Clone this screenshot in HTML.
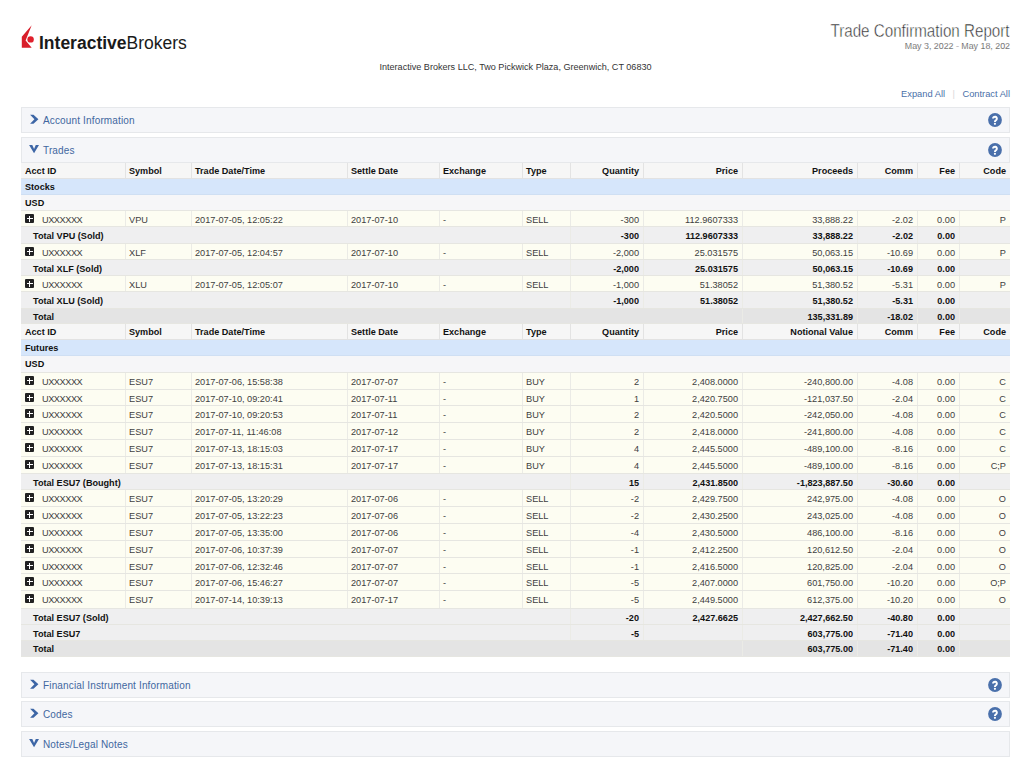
<!DOCTYPE html>
<html><head><meta charset="utf-8"><style>
*{margin:0;padding:0;box-sizing:border-box}
html,body{width:1031px;height:776px;overflow:hidden;background:#fff;font-family:"Liberation Sans",sans-serif}
.abs{position:absolute}
.logo{position:absolute;left:21px;top:24px}
.brand{position:absolute;left:39px;top:32.5px;font-size:17.5px;color:#1a1a1a;white-space:nowrap}
.brand b{font-weight:bold}
.title{position:absolute;right:21px;top:21px;font-size:17.5px;line-height:20px;color:#2a2a2a;-webkit-text-stroke:0.45px #fff;white-space:nowrap;transform:scaleX(0.867);transform-origin:100% 50%}
.date{position:absolute;right:21px;top:40.5px;font-size:8.85px;color:#3a3a3a;-webkit-text-stroke:0.2px #fff;white-space:nowrap}
.addr{position:absolute;left:0;width:1031px;top:61.5px;text-align:center;font-size:9.08px;color:#333;white-space:nowrap}
.links{position:absolute;right:21px;top:88.5px;font-size:9.3px;color:#4a6fa8;white-space:nowrap}
.links .sep{color:#d8d8d8;margin:0 7.5px 0 7.5px}
.panel{position:absolute;left:21px;width:989px;background:#f5f6f9;border:1px solid #e6e8eb}
.chev{position:absolute;left:8px;top:6px}
.chevd{position:absolute;left:7px;top:6px}
.ptitle{position:absolute;left:21px;top:6.5px;font-size:10px;letter-spacing:0.15px;color:#42679f;white-space:nowrap}
.help{position:absolute;right:7px;top:4.6px}
.tbl{position:absolute;left:21px;top:0;width:989px}
.row{position:absolute;left:0;width:989px;border-bottom:1px solid #e6e6e1}
.row.hdr{border-bottom:1px solid #e2e2e2}
.row.asset{border-bottom:1px solid #cfdff3}
.c{position:absolute;top:0;height:100%;padding:0 4px;white-space:nowrap;overflow:visible;font-size:9.1px;line-height:inherit}
.c.l{text-align:left}
.c.r{text-align:right}
.c.b{font-weight:bold;color:#111}
.c.n{color:#404040;font-size:9.2px}
.vl{position:absolute;top:0;width:1px;height:100%}
.plus{position:absolute;left:4px;top:3px;width:9px;height:9px;background:#222;border-radius:1px}
.plus:before{content:"";position:absolute;left:1.5px;top:3.6px;width:6px;height:1.8px;background:#fff}
.plus:after{content:"";position:absolute;left:3.6px;top:1.5px;width:1.8px;height:6px;background:#fff}
</style></head><body>
<svg class="logo" width="16" height="26" viewBox="0 0 16 26"><path d="M10.7 1.2 L0.8 12.7 L0.8 23.7 L10.7 23.7 L4.6 16.5 Z" fill="#d81e2a"/><circle cx="9.6" cy="15.4" r="3.2" fill="#e0202c"/></svg><div class="brand"><b>Interactive</b>Brokers</div><div class="title">Trade Confirmation Report</div><div class="date">May 3, 2022 - May 18, 202</div><div class="addr">Interactive Brokers LLC, Two Pickwick Plaza, Greenwich, CT 06830</div><div class="links">Expand All<span class="sep">|</span>Contract All</div><div class="panel" style="top:107px;height:26px"><svg class="chev" width="10" height="11" viewBox="0 0 10 11"><path d="M0.1 0.7 L3.5 0.7 L8.4 5.25 L3.5 9.8 L0.1 9.8 L4.4 5.25 Z" fill="#3d66a6"/></svg><span class="ptitle">Account Information</span><svg class="help" width="14" height="14" viewBox="0 0 14 14"><circle cx="7" cy="7" r="6.9" fill="#4a70ab"/><path d="M5.05 5.6 A1.9 1.9 0 1 1 8.6 6.55 Q8.2 7.2 7.5 7.6 Q6.95 7.95 6.95 9.1" stroke="#fff" stroke-width="2" fill="none"/><circle cx="6.95" cy="10.85" r="1.1" fill="#fff"/></svg></div><div class="panel" style="top:137px;height:26px"><svg class="chevd" width="11" height="10" viewBox="0 0 11 10"><path d="M0.1 0.9 L3.3 0.9 L5.05 4.9 L6.8 0.9 L10 0.9 L5.05 9.2 Z" fill="#3d66a6"/></svg><span class="ptitle">Trades</span><svg class="help" width="14" height="14" viewBox="0 0 14 14"><circle cx="7" cy="7" r="6.9" fill="#4a70ab"/><path d="M5.05 5.6 A1.9 1.9 0 1 1 8.6 6.55 Q8.2 7.2 7.5 7.6 Q6.95 7.95 6.95 9.1" stroke="#fff" stroke-width="2" fill="none"/><circle cx="6.95" cy="10.85" r="1.1" fill="#fff"/></svg></div><div class="tbl"><div class="row hdr" style="top:163px;height:16px;line-height:17px;background:#f6f6f6"><div class="c b l" style="left:0px;width:104px">Acct ID</div><div class="c b l" style="left:104px;width:66px">Symbol</div><div class="c b l" style="left:170px;width:156px">Trade Date/Time</div><div class="c b l" style="left:326px;width:92px">Settle Date</div><div class="c b l" style="left:418px;width:83px">Exchange</div><div class="c b l" style="left:501px;width:48px">Type</div><div class="c b r" style="left:549px;width:73px">Quantity</div><div class="c b r" style="left:622px;width:99px">Price</div><div class="c b r" style="left:721px;width:115px">Proceeds</div><div class="c b r" style="left:836px;width:60px">Comm</div><div class="c b r" style="left:896px;width:42px">Fee</div><div class="c b r" style="left:938px;width:51px">Code</div><i class="vl" style="left:104px;background:#e3e3e3"></i><i class="vl" style="left:170px;background:#e3e3e3"></i><i class="vl" style="left:326px;background:#e3e3e3"></i><i class="vl" style="left:418px;background:#e3e3e3"></i><i class="vl" style="left:501px;background:#e3e3e3"></i><i class="vl" style="left:549px;background:#e3e3e3"></i><i class="vl" style="left:622px;background:#e3e3e3"></i><i class="vl" style="left:721px;background:#e3e3e3"></i><i class="vl" style="left:836px;background:#e3e3e3"></i><i class="vl" style="left:896px;background:#e3e3e3"></i><i class="vl" style="left:938px;background:#e3e3e3"></i></div><div class="row asset" style="top:179px;height:16px;line-height:17px;background:#d6e6fb"><div class="c b l" style="left:0px;width:989px">Stocks</div></div><div class="row cur" style="top:195px;height:16px;line-height:17px;background:#f6f6f8"><div class="c b l" style="left:0px;width:989px">USD</div></div><div class="row data" style="top:211px;height:16px;line-height:18px;background:#fdfdf2"><i class="plus"></i><div class="c n l" style="left:0px;width:104px;padding-left:21px;letter-spacing:-0.45px">UXXXXXX</div><div class="c n l" style="left:104px;width:66px">VPU</div><div class="c n l" style="left:170px;width:156px">2017-07-05, 12:05:22</div><div class="c n l" style="left:326px;width:92px">2017-07-10</div><div class="c n l" style="left:418px;width:83px">-</div><div class="c n l" style="left:501px;width:48px">SELL</div><div class="c n r" style="left:549px;width:73px">-300</div><div class="c n r" style="left:622px;width:99px">112.9607333</div><div class="c n r" style="left:721px;width:115px">33,888.22</div><div class="c n r" style="left:836px;width:60px">-2.02</div><div class="c n r" style="left:896px;width:42px">0.00</div><div class="c n r" style="left:938px;width:51px">P</div><i class="vl" style="left:104px;background:#ebebe6"></i><i class="vl" style="left:170px;background:#ebebe6"></i><i class="vl" style="left:326px;background:#ebebe6"></i><i class="vl" style="left:418px;background:#ebebe6"></i><i class="vl" style="left:501px;background:#ebebe6"></i><i class="vl" style="left:549px;background:#ebebe6"></i><i class="vl" style="left:622px;background:#ebebe6"></i><i class="vl" style="left:721px;background:#ebebe6"></i><i class="vl" style="left:836px;background:#ebebe6"></i><i class="vl" style="left:896px;background:#ebebe6"></i><i class="vl" style="left:938px;background:#ebebe6"></i></div><div class="row sub" style="top:227px;height:17px;line-height:18px;background:#efeff0"><div class="c b l" style="left:0px;width:549px;padding-left:12px">Total VPU (Sold)</div><div class="c b r" style="left:549px;width:73px">-300</div><div class="c b r" style="left:622px;width:99px">112.9607333</div><div class="c b r" style="left:721px;width:115px">33,888.22</div><div class="c b r" style="left:836px;width:60px">-2.02</div><div class="c b r" style="left:896px;width:42px">0.00</div><i class="vl" style="left:549px;background:#ebebe6"></i><i class="vl" style="left:622px;background:#ebebe6"></i><i class="vl" style="left:721px;background:#ebebe6"></i><i class="vl" style="left:836px;background:#ebebe6"></i><i class="vl" style="left:896px;background:#ebebe6"></i><i class="vl" style="left:938px;background:#ebebe6"></i></div><div class="row data" style="top:244px;height:16px;line-height:18px;background:#fdfdf2"><i class="plus"></i><div class="c n l" style="left:0px;width:104px;padding-left:21px;letter-spacing:-0.45px">UXXXXXX</div><div class="c n l" style="left:104px;width:66px">XLF</div><div class="c n l" style="left:170px;width:156px">2017-07-05, 12:04:57</div><div class="c n l" style="left:326px;width:92px">2017-07-10</div><div class="c n l" style="left:418px;width:83px">-</div><div class="c n l" style="left:501px;width:48px">SELL</div><div class="c n r" style="left:549px;width:73px">-2,000</div><div class="c n r" style="left:622px;width:99px">25.031575</div><div class="c n r" style="left:721px;width:115px">50,063.15</div><div class="c n r" style="left:836px;width:60px">-10.69</div><div class="c n r" style="left:896px;width:42px">0.00</div><div class="c n r" style="left:938px;width:51px">P</div><i class="vl" style="left:104px;background:#ebebe6"></i><i class="vl" style="left:170px;background:#ebebe6"></i><i class="vl" style="left:326px;background:#ebebe6"></i><i class="vl" style="left:418px;background:#ebebe6"></i><i class="vl" style="left:501px;background:#ebebe6"></i><i class="vl" style="left:549px;background:#ebebe6"></i><i class="vl" style="left:622px;background:#ebebe6"></i><i class="vl" style="left:721px;background:#ebebe6"></i><i class="vl" style="left:836px;background:#ebebe6"></i><i class="vl" style="left:896px;background:#ebebe6"></i><i class="vl" style="left:938px;background:#ebebe6"></i></div><div class="row sub" style="top:260px;height:16px;line-height:18px;background:#efeff0"><div class="c b l" style="left:0px;width:549px;padding-left:12px">Total XLF (Sold)</div><div class="c b r" style="left:549px;width:73px">-2,000</div><div class="c b r" style="left:622px;width:99px">25.031575</div><div class="c b r" style="left:721px;width:115px">50,063.15</div><div class="c b r" style="left:836px;width:60px">-10.69</div><div class="c b r" style="left:896px;width:42px">0.00</div><i class="vl" style="left:549px;background:#ebebe6"></i><i class="vl" style="left:622px;background:#ebebe6"></i><i class="vl" style="left:721px;background:#ebebe6"></i><i class="vl" style="left:836px;background:#ebebe6"></i><i class="vl" style="left:896px;background:#ebebe6"></i><i class="vl" style="left:938px;background:#ebebe6"></i></div><div class="row data" style="top:276px;height:16px;line-height:18px;background:#fdfdf2"><i class="plus"></i><div class="c n l" style="left:0px;width:104px;padding-left:21px;letter-spacing:-0.45px">UXXXXXX</div><div class="c n l" style="left:104px;width:66px">XLU</div><div class="c n l" style="left:170px;width:156px">2017-07-05, 12:05:07</div><div class="c n l" style="left:326px;width:92px">2017-07-10</div><div class="c n l" style="left:418px;width:83px">-</div><div class="c n l" style="left:501px;width:48px">SELL</div><div class="c n r" style="left:549px;width:73px">-1,000</div><div class="c n r" style="left:622px;width:99px">51.38052</div><div class="c n r" style="left:721px;width:115px">51,380.52</div><div class="c n r" style="left:836px;width:60px">-5.31</div><div class="c n r" style="left:896px;width:42px">0.00</div><div class="c n r" style="left:938px;width:51px">P</div><i class="vl" style="left:104px;background:#ebebe6"></i><i class="vl" style="left:170px;background:#ebebe6"></i><i class="vl" style="left:326px;background:#ebebe6"></i><i class="vl" style="left:418px;background:#ebebe6"></i><i class="vl" style="left:501px;background:#ebebe6"></i><i class="vl" style="left:549px;background:#ebebe6"></i><i class="vl" style="left:622px;background:#ebebe6"></i><i class="vl" style="left:721px;background:#ebebe6"></i><i class="vl" style="left:836px;background:#ebebe6"></i><i class="vl" style="left:896px;background:#ebebe6"></i><i class="vl" style="left:938px;background:#ebebe6"></i></div><div class="row sub" style="top:292px;height:17px;line-height:18px;background:#efeff0"><div class="c b l" style="left:0px;width:549px;padding-left:12px">Total XLU (Sold)</div><div class="c b r" style="left:549px;width:73px">-1,000</div><div class="c b r" style="left:622px;width:99px">51.38052</div><div class="c b r" style="left:721px;width:115px">51,380.52</div><div class="c b r" style="left:836px;width:60px">-5.31</div><div class="c b r" style="left:896px;width:42px">0.00</div><i class="vl" style="left:549px;background:#ebebe6"></i><i class="vl" style="left:622px;background:#ebebe6"></i><i class="vl" style="left:721px;background:#ebebe6"></i><i class="vl" style="left:836px;background:#ebebe6"></i><i class="vl" style="left:896px;background:#ebebe6"></i><i class="vl" style="left:938px;background:#ebebe6"></i></div><div class="row tot" style="top:309px;height:15px;line-height:17px;background:#e4e4e4"><div class="c b l" style="left:0px;width:721px;padding-left:12px">Total</div><div class="c b r" style="left:721px;width:115px">135,331.89</div><div class="c b r" style="left:836px;width:60px">-18.02</div><div class="c b r" style="left:896px;width:42px">0.00</div><i class="vl" style="left:721px;background:#ebebe6"></i><i class="vl" style="left:836px;background:#ebebe6"></i><i class="vl" style="left:896px;background:#ebebe6"></i><i class="vl" style="left:938px;background:#ebebe6"></i></div><div class="row hdr" style="top:324px;height:16px;line-height:17px;background:#f6f6f6"><div class="c b l" style="left:0px;width:104px">Acct ID</div><div class="c b l" style="left:104px;width:66px">Symbol</div><div class="c b l" style="left:170px;width:156px">Trade Date/Time</div><div class="c b l" style="left:326px;width:92px">Settle Date</div><div class="c b l" style="left:418px;width:83px">Exchange</div><div class="c b l" style="left:501px;width:48px">Type</div><div class="c b r" style="left:549px;width:73px">Quantity</div><div class="c b r" style="left:622px;width:99px">Price</div><div class="c b r" style="left:721px;width:115px">Notional Value</div><div class="c b r" style="left:836px;width:60px">Comm</div><div class="c b r" style="left:896px;width:42px">Fee</div><div class="c b r" style="left:938px;width:51px">Code</div><i class="vl" style="left:104px;background:#e3e3e3"></i><i class="vl" style="left:170px;background:#e3e3e3"></i><i class="vl" style="left:326px;background:#e3e3e3"></i><i class="vl" style="left:418px;background:#e3e3e3"></i><i class="vl" style="left:501px;background:#e3e3e3"></i><i class="vl" style="left:549px;background:#e3e3e3"></i><i class="vl" style="left:622px;background:#e3e3e3"></i><i class="vl" style="left:721px;background:#e3e3e3"></i><i class="vl" style="left:836px;background:#e3e3e3"></i><i class="vl" style="left:896px;background:#e3e3e3"></i><i class="vl" style="left:938px;background:#e3e3e3"></i></div><div class="row asset" style="top:340px;height:16px;line-height:17px;background:#d6e6fb"><div class="c b l" style="left:0px;width:989px">Futures</div></div><div class="row cur" style="top:356px;height:17px;line-height:17px;background:#f6f6f8"><div class="c b l" style="left:0px;width:989px">USD</div></div><div class="row data" style="top:373px;height:17px;line-height:18px;background:#fdfdf2"><i class="plus"></i><div class="c n l" style="left:0px;width:104px;padding-left:21px;letter-spacing:-0.45px">UXXXXXX</div><div class="c n l" style="left:104px;width:66px">ESU7</div><div class="c n l" style="left:170px;width:156px">2017-07-06, 15:58:38</div><div class="c n l" style="left:326px;width:92px">2017-07-07</div><div class="c n l" style="left:418px;width:83px">-</div><div class="c n l" style="left:501px;width:48px">BUY</div><div class="c n r" style="left:549px;width:73px">2</div><div class="c n r" style="left:622px;width:99px">2,408.0000</div><div class="c n r" style="left:721px;width:115px">-240,800.00</div><div class="c n r" style="left:836px;width:60px">-4.08</div><div class="c n r" style="left:896px;width:42px">0.00</div><div class="c n r" style="left:938px;width:51px">C</div><i class="vl" style="left:104px;background:#ebebe6"></i><i class="vl" style="left:170px;background:#ebebe6"></i><i class="vl" style="left:326px;background:#ebebe6"></i><i class="vl" style="left:418px;background:#ebebe6"></i><i class="vl" style="left:501px;background:#ebebe6"></i><i class="vl" style="left:549px;background:#ebebe6"></i><i class="vl" style="left:622px;background:#ebebe6"></i><i class="vl" style="left:721px;background:#ebebe6"></i><i class="vl" style="left:836px;background:#ebebe6"></i><i class="vl" style="left:896px;background:#ebebe6"></i><i class="vl" style="left:938px;background:#ebebe6"></i></div><div class="row data" style="top:390px;height:16px;line-height:18px;background:#fdfdf2"><i class="plus"></i><div class="c n l" style="left:0px;width:104px;padding-left:21px;letter-spacing:-0.45px">UXXXXXX</div><div class="c n l" style="left:104px;width:66px">ESU7</div><div class="c n l" style="left:170px;width:156px">2017-07-10, 09:20:41</div><div class="c n l" style="left:326px;width:92px">2017-07-11</div><div class="c n l" style="left:418px;width:83px">-</div><div class="c n l" style="left:501px;width:48px">BUY</div><div class="c n r" style="left:549px;width:73px">1</div><div class="c n r" style="left:622px;width:99px">2,420.7500</div><div class="c n r" style="left:721px;width:115px">-121,037.50</div><div class="c n r" style="left:836px;width:60px">-2.04</div><div class="c n r" style="left:896px;width:42px">0.00</div><div class="c n r" style="left:938px;width:51px">C</div><i class="vl" style="left:104px;background:#ebebe6"></i><i class="vl" style="left:170px;background:#ebebe6"></i><i class="vl" style="left:326px;background:#ebebe6"></i><i class="vl" style="left:418px;background:#ebebe6"></i><i class="vl" style="left:501px;background:#ebebe6"></i><i class="vl" style="left:549px;background:#ebebe6"></i><i class="vl" style="left:622px;background:#ebebe6"></i><i class="vl" style="left:721px;background:#ebebe6"></i><i class="vl" style="left:836px;background:#ebebe6"></i><i class="vl" style="left:896px;background:#ebebe6"></i><i class="vl" style="left:938px;background:#ebebe6"></i></div><div class="row data" style="top:406px;height:17px;line-height:18px;background:#fdfdf2"><i class="plus"></i><div class="c n l" style="left:0px;width:104px;padding-left:21px;letter-spacing:-0.45px">UXXXXXX</div><div class="c n l" style="left:104px;width:66px">ESU7</div><div class="c n l" style="left:170px;width:156px">2017-07-10, 09:20:53</div><div class="c n l" style="left:326px;width:92px">2017-07-11</div><div class="c n l" style="left:418px;width:83px">-</div><div class="c n l" style="left:501px;width:48px">BUY</div><div class="c n r" style="left:549px;width:73px">2</div><div class="c n r" style="left:622px;width:99px">2,420.5000</div><div class="c n r" style="left:721px;width:115px">-242,050.00</div><div class="c n r" style="left:836px;width:60px">-4.08</div><div class="c n r" style="left:896px;width:42px">0.00</div><div class="c n r" style="left:938px;width:51px">C</div><i class="vl" style="left:104px;background:#ebebe6"></i><i class="vl" style="left:170px;background:#ebebe6"></i><i class="vl" style="left:326px;background:#ebebe6"></i><i class="vl" style="left:418px;background:#ebebe6"></i><i class="vl" style="left:501px;background:#ebebe6"></i><i class="vl" style="left:549px;background:#ebebe6"></i><i class="vl" style="left:622px;background:#ebebe6"></i><i class="vl" style="left:721px;background:#ebebe6"></i><i class="vl" style="left:836px;background:#ebebe6"></i><i class="vl" style="left:896px;background:#ebebe6"></i><i class="vl" style="left:938px;background:#ebebe6"></i></div><div class="row data" style="top:423px;height:17px;line-height:18px;background:#fdfdf2"><i class="plus"></i><div class="c n l" style="left:0px;width:104px;padding-left:21px;letter-spacing:-0.45px">UXXXXXX</div><div class="c n l" style="left:104px;width:66px">ESU7</div><div class="c n l" style="left:170px;width:156px">2017-07-11, 11:46:08</div><div class="c n l" style="left:326px;width:92px">2017-07-12</div><div class="c n l" style="left:418px;width:83px">-</div><div class="c n l" style="left:501px;width:48px">BUY</div><div class="c n r" style="left:549px;width:73px">2</div><div class="c n r" style="left:622px;width:99px">2,418.0000</div><div class="c n r" style="left:721px;width:115px">-241,800.00</div><div class="c n r" style="left:836px;width:60px">-4.08</div><div class="c n r" style="left:896px;width:42px">0.00</div><div class="c n r" style="left:938px;width:51px">C</div><i class="vl" style="left:104px;background:#ebebe6"></i><i class="vl" style="left:170px;background:#ebebe6"></i><i class="vl" style="left:326px;background:#ebebe6"></i><i class="vl" style="left:418px;background:#ebebe6"></i><i class="vl" style="left:501px;background:#ebebe6"></i><i class="vl" style="left:549px;background:#ebebe6"></i><i class="vl" style="left:622px;background:#ebebe6"></i><i class="vl" style="left:721px;background:#ebebe6"></i><i class="vl" style="left:836px;background:#ebebe6"></i><i class="vl" style="left:896px;background:#ebebe6"></i><i class="vl" style="left:938px;background:#ebebe6"></i></div><div class="row data" style="top:440px;height:17px;line-height:18px;background:#fdfdf2"><i class="plus"></i><div class="c n l" style="left:0px;width:104px;padding-left:21px;letter-spacing:-0.45px">UXXXXXX</div><div class="c n l" style="left:104px;width:66px">ESU7</div><div class="c n l" style="left:170px;width:156px">2017-07-13, 18:15:03</div><div class="c n l" style="left:326px;width:92px">2017-07-17</div><div class="c n l" style="left:418px;width:83px">-</div><div class="c n l" style="left:501px;width:48px">BUY</div><div class="c n r" style="left:549px;width:73px">4</div><div class="c n r" style="left:622px;width:99px">2,445.5000</div><div class="c n r" style="left:721px;width:115px">-489,100.00</div><div class="c n r" style="left:836px;width:60px">-8.16</div><div class="c n r" style="left:896px;width:42px">0.00</div><div class="c n r" style="left:938px;width:51px">C</div><i class="vl" style="left:104px;background:#ebebe6"></i><i class="vl" style="left:170px;background:#ebebe6"></i><i class="vl" style="left:326px;background:#ebebe6"></i><i class="vl" style="left:418px;background:#ebebe6"></i><i class="vl" style="left:501px;background:#ebebe6"></i><i class="vl" style="left:549px;background:#ebebe6"></i><i class="vl" style="left:622px;background:#ebebe6"></i><i class="vl" style="left:721px;background:#ebebe6"></i><i class="vl" style="left:836px;background:#ebebe6"></i><i class="vl" style="left:896px;background:#ebebe6"></i><i class="vl" style="left:938px;background:#ebebe6"></i></div><div class="row data" style="top:457px;height:17px;line-height:18px;background:#fdfdf2"><i class="plus"></i><div class="c n l" style="left:0px;width:104px;padding-left:21px;letter-spacing:-0.45px">UXXXXXX</div><div class="c n l" style="left:104px;width:66px">ESU7</div><div class="c n l" style="left:170px;width:156px">2017-07-13, 18:15:31</div><div class="c n l" style="left:326px;width:92px">2017-07-17</div><div class="c n l" style="left:418px;width:83px">-</div><div class="c n l" style="left:501px;width:48px">BUY</div><div class="c n r" style="left:549px;width:73px">4</div><div class="c n r" style="left:622px;width:99px">2,445.5000</div><div class="c n r" style="left:721px;width:115px">-489,100.00</div><div class="c n r" style="left:836px;width:60px">-8.16</div><div class="c n r" style="left:896px;width:42px">0.00</div><div class="c n r" style="left:938px;width:51px">C;P</div><i class="vl" style="left:104px;background:#ebebe6"></i><i class="vl" style="left:170px;background:#ebebe6"></i><i class="vl" style="left:326px;background:#ebebe6"></i><i class="vl" style="left:418px;background:#ebebe6"></i><i class="vl" style="left:501px;background:#ebebe6"></i><i class="vl" style="left:549px;background:#ebebe6"></i><i class="vl" style="left:622px;background:#ebebe6"></i><i class="vl" style="left:721px;background:#ebebe6"></i><i class="vl" style="left:836px;background:#ebebe6"></i><i class="vl" style="left:896px;background:#ebebe6"></i><i class="vl" style="left:938px;background:#ebebe6"></i></div><div class="row sub" style="top:474px;height:16px;line-height:18px;background:#efeff0"><div class="c b l" style="left:0px;width:549px;padding-left:12px">Total ESU7 (Bought)</div><div class="c b r" style="left:549px;width:73px">15</div><div class="c b r" style="left:622px;width:99px">2,431.8500</div><div class="c b r" style="left:721px;width:115px">-1,823,887.50</div><div class="c b r" style="left:836px;width:60px">-30.60</div><div class="c b r" style="left:896px;width:42px">0.00</div><i class="vl" style="left:549px;background:#ebebe6"></i><i class="vl" style="left:622px;background:#ebebe6"></i><i class="vl" style="left:721px;background:#ebebe6"></i><i class="vl" style="left:836px;background:#ebebe6"></i><i class="vl" style="left:896px;background:#ebebe6"></i><i class="vl" style="left:938px;background:#ebebe6"></i></div><div class="row data" style="top:490px;height:17px;line-height:18px;background:#fdfdf2"><i class="plus"></i><div class="c n l" style="left:0px;width:104px;padding-left:21px;letter-spacing:-0.45px">UXXXXXX</div><div class="c n l" style="left:104px;width:66px">ESU7</div><div class="c n l" style="left:170px;width:156px">2017-07-05, 13:20:29</div><div class="c n l" style="left:326px;width:92px">2017-07-06</div><div class="c n l" style="left:418px;width:83px">-</div><div class="c n l" style="left:501px;width:48px">SELL</div><div class="c n r" style="left:549px;width:73px">-2</div><div class="c n r" style="left:622px;width:99px">2,429.7500</div><div class="c n r" style="left:721px;width:115px">242,975.00</div><div class="c n r" style="left:836px;width:60px">-4.08</div><div class="c n r" style="left:896px;width:42px">0.00</div><div class="c n r" style="left:938px;width:51px">O</div><i class="vl" style="left:104px;background:#ebebe6"></i><i class="vl" style="left:170px;background:#ebebe6"></i><i class="vl" style="left:326px;background:#ebebe6"></i><i class="vl" style="left:418px;background:#ebebe6"></i><i class="vl" style="left:501px;background:#ebebe6"></i><i class="vl" style="left:549px;background:#ebebe6"></i><i class="vl" style="left:622px;background:#ebebe6"></i><i class="vl" style="left:721px;background:#ebebe6"></i><i class="vl" style="left:836px;background:#ebebe6"></i><i class="vl" style="left:896px;background:#ebebe6"></i><i class="vl" style="left:938px;background:#ebebe6"></i></div><div class="row data" style="top:507px;height:17px;line-height:18px;background:#fdfdf2"><i class="plus"></i><div class="c n l" style="left:0px;width:104px;padding-left:21px;letter-spacing:-0.45px">UXXXXXX</div><div class="c n l" style="left:104px;width:66px">ESU7</div><div class="c n l" style="left:170px;width:156px">2017-07-05, 13:22:23</div><div class="c n l" style="left:326px;width:92px">2017-07-06</div><div class="c n l" style="left:418px;width:83px">-</div><div class="c n l" style="left:501px;width:48px">SELL</div><div class="c n r" style="left:549px;width:73px">-2</div><div class="c n r" style="left:622px;width:99px">2,430.2500</div><div class="c n r" style="left:721px;width:115px">243,025.00</div><div class="c n r" style="left:836px;width:60px">-4.08</div><div class="c n r" style="left:896px;width:42px">0.00</div><div class="c n r" style="left:938px;width:51px">O</div><i class="vl" style="left:104px;background:#ebebe6"></i><i class="vl" style="left:170px;background:#ebebe6"></i><i class="vl" style="left:326px;background:#ebebe6"></i><i class="vl" style="left:418px;background:#ebebe6"></i><i class="vl" style="left:501px;background:#ebebe6"></i><i class="vl" style="left:549px;background:#ebebe6"></i><i class="vl" style="left:622px;background:#ebebe6"></i><i class="vl" style="left:721px;background:#ebebe6"></i><i class="vl" style="left:836px;background:#ebebe6"></i><i class="vl" style="left:896px;background:#ebebe6"></i><i class="vl" style="left:938px;background:#ebebe6"></i></div><div class="row data" style="top:524px;height:17px;line-height:18px;background:#fdfdf2"><i class="plus"></i><div class="c n l" style="left:0px;width:104px;padding-left:21px;letter-spacing:-0.45px">UXXXXXX</div><div class="c n l" style="left:104px;width:66px">ESU7</div><div class="c n l" style="left:170px;width:156px">2017-07-05, 13:35:00</div><div class="c n l" style="left:326px;width:92px">2017-07-06</div><div class="c n l" style="left:418px;width:83px">-</div><div class="c n l" style="left:501px;width:48px">SELL</div><div class="c n r" style="left:549px;width:73px">-4</div><div class="c n r" style="left:622px;width:99px">2,430.5000</div><div class="c n r" style="left:721px;width:115px">486,100.00</div><div class="c n r" style="left:836px;width:60px">-8.16</div><div class="c n r" style="left:896px;width:42px">0.00</div><div class="c n r" style="left:938px;width:51px">O</div><i class="vl" style="left:104px;background:#ebebe6"></i><i class="vl" style="left:170px;background:#ebebe6"></i><i class="vl" style="left:326px;background:#ebebe6"></i><i class="vl" style="left:418px;background:#ebebe6"></i><i class="vl" style="left:501px;background:#ebebe6"></i><i class="vl" style="left:549px;background:#ebebe6"></i><i class="vl" style="left:622px;background:#ebebe6"></i><i class="vl" style="left:721px;background:#ebebe6"></i><i class="vl" style="left:836px;background:#ebebe6"></i><i class="vl" style="left:896px;background:#ebebe6"></i><i class="vl" style="left:938px;background:#ebebe6"></i></div><div class="row data" style="top:541px;height:17px;line-height:18px;background:#fdfdf2"><i class="plus"></i><div class="c n l" style="left:0px;width:104px;padding-left:21px;letter-spacing:-0.45px">UXXXXXX</div><div class="c n l" style="left:104px;width:66px">ESU7</div><div class="c n l" style="left:170px;width:156px">2017-07-06, 10:37:39</div><div class="c n l" style="left:326px;width:92px">2017-07-07</div><div class="c n l" style="left:418px;width:83px">-</div><div class="c n l" style="left:501px;width:48px">SELL</div><div class="c n r" style="left:549px;width:73px">-1</div><div class="c n r" style="left:622px;width:99px">2,412.2500</div><div class="c n r" style="left:721px;width:115px">120,612.50</div><div class="c n r" style="left:836px;width:60px">-2.04</div><div class="c n r" style="left:896px;width:42px">0.00</div><div class="c n r" style="left:938px;width:51px">O</div><i class="vl" style="left:104px;background:#ebebe6"></i><i class="vl" style="left:170px;background:#ebebe6"></i><i class="vl" style="left:326px;background:#ebebe6"></i><i class="vl" style="left:418px;background:#ebebe6"></i><i class="vl" style="left:501px;background:#ebebe6"></i><i class="vl" style="left:549px;background:#ebebe6"></i><i class="vl" style="left:622px;background:#ebebe6"></i><i class="vl" style="left:721px;background:#ebebe6"></i><i class="vl" style="left:836px;background:#ebebe6"></i><i class="vl" style="left:896px;background:#ebebe6"></i><i class="vl" style="left:938px;background:#ebebe6"></i></div><div class="row data" style="top:558px;height:16px;line-height:18px;background:#fdfdf2"><i class="plus"></i><div class="c n l" style="left:0px;width:104px;padding-left:21px;letter-spacing:-0.45px">UXXXXXX</div><div class="c n l" style="left:104px;width:66px">ESU7</div><div class="c n l" style="left:170px;width:156px">2017-07-06, 12:32:46</div><div class="c n l" style="left:326px;width:92px">2017-07-07</div><div class="c n l" style="left:418px;width:83px">-</div><div class="c n l" style="left:501px;width:48px">SELL</div><div class="c n r" style="left:549px;width:73px">-1</div><div class="c n r" style="left:622px;width:99px">2,416.5000</div><div class="c n r" style="left:721px;width:115px">120,825.00</div><div class="c n r" style="left:836px;width:60px">-2.04</div><div class="c n r" style="left:896px;width:42px">0.00</div><div class="c n r" style="left:938px;width:51px">O</div><i class="vl" style="left:104px;background:#ebebe6"></i><i class="vl" style="left:170px;background:#ebebe6"></i><i class="vl" style="left:326px;background:#ebebe6"></i><i class="vl" style="left:418px;background:#ebebe6"></i><i class="vl" style="left:501px;background:#ebebe6"></i><i class="vl" style="left:549px;background:#ebebe6"></i><i class="vl" style="left:622px;background:#ebebe6"></i><i class="vl" style="left:721px;background:#ebebe6"></i><i class="vl" style="left:836px;background:#ebebe6"></i><i class="vl" style="left:896px;background:#ebebe6"></i><i class="vl" style="left:938px;background:#ebebe6"></i></div><div class="row data" style="top:574px;height:17px;line-height:18px;background:#fdfdf2"><i class="plus"></i><div class="c n l" style="left:0px;width:104px;padding-left:21px;letter-spacing:-0.45px">UXXXXXX</div><div class="c n l" style="left:104px;width:66px">ESU7</div><div class="c n l" style="left:170px;width:156px">2017-07-06, 15:46:27</div><div class="c n l" style="left:326px;width:92px">2017-07-07</div><div class="c n l" style="left:418px;width:83px">-</div><div class="c n l" style="left:501px;width:48px">SELL</div><div class="c n r" style="left:549px;width:73px">-5</div><div class="c n r" style="left:622px;width:99px">2,407.0000</div><div class="c n r" style="left:721px;width:115px">601,750.00</div><div class="c n r" style="left:836px;width:60px">-10.20</div><div class="c n r" style="left:896px;width:42px">0.00</div><div class="c n r" style="left:938px;width:51px">O;P</div><i class="vl" style="left:104px;background:#ebebe6"></i><i class="vl" style="left:170px;background:#ebebe6"></i><i class="vl" style="left:326px;background:#ebebe6"></i><i class="vl" style="left:418px;background:#ebebe6"></i><i class="vl" style="left:501px;background:#ebebe6"></i><i class="vl" style="left:549px;background:#ebebe6"></i><i class="vl" style="left:622px;background:#ebebe6"></i><i class="vl" style="left:721px;background:#ebebe6"></i><i class="vl" style="left:836px;background:#ebebe6"></i><i class="vl" style="left:896px;background:#ebebe6"></i><i class="vl" style="left:938px;background:#ebebe6"></i></div><div class="row data" style="top:591px;height:18px;line-height:18px;background:#fdfdf2"><i class="plus"></i><div class="c n l" style="left:0px;width:104px;padding-left:21px;letter-spacing:-0.45px">UXXXXXX</div><div class="c n l" style="left:104px;width:66px">ESU7</div><div class="c n l" style="left:170px;width:156px">2017-07-14, 10:39:13</div><div class="c n l" style="left:326px;width:92px">2017-07-17</div><div class="c n l" style="left:418px;width:83px">-</div><div class="c n l" style="left:501px;width:48px">SELL</div><div class="c n r" style="left:549px;width:73px">-5</div><div class="c n r" style="left:622px;width:99px">2,449.5000</div><div class="c n r" style="left:721px;width:115px">612,375.00</div><div class="c n r" style="left:836px;width:60px">-10.20</div><div class="c n r" style="left:896px;width:42px">0.00</div><div class="c n r" style="left:938px;width:51px">O</div><i class="vl" style="left:104px;background:#ebebe6"></i><i class="vl" style="left:170px;background:#ebebe6"></i><i class="vl" style="left:326px;background:#ebebe6"></i><i class="vl" style="left:418px;background:#ebebe6"></i><i class="vl" style="left:501px;background:#ebebe6"></i><i class="vl" style="left:549px;background:#ebebe6"></i><i class="vl" style="left:622px;background:#ebebe6"></i><i class="vl" style="left:721px;background:#ebebe6"></i><i class="vl" style="left:836px;background:#ebebe6"></i><i class="vl" style="left:896px;background:#ebebe6"></i><i class="vl" style="left:938px;background:#ebebe6"></i></div><div class="row sub" style="top:609px;height:16px;line-height:18px;background:#efeff0"><div class="c b l" style="left:0px;width:549px;padding-left:12px">Total ESU7 (Sold)</div><div class="c b r" style="left:549px;width:73px">-20</div><div class="c b r" style="left:622px;width:99px">2,427.6625</div><div class="c b r" style="left:721px;width:115px">2,427,662.50</div><div class="c b r" style="left:836px;width:60px">-40.80</div><div class="c b r" style="left:896px;width:42px">0.00</div><i class="vl" style="left:549px;background:#ebebe6"></i><i class="vl" style="left:622px;background:#ebebe6"></i><i class="vl" style="left:721px;background:#ebebe6"></i><i class="vl" style="left:836px;background:#ebebe6"></i><i class="vl" style="left:896px;background:#ebebe6"></i><i class="vl" style="left:938px;background:#ebebe6"></i></div><div class="row sub" style="top:625px;height:16px;line-height:18px;background:#efeff0"><div class="c b l" style="left:0px;width:549px;padding-left:12px">Total ESU7</div><div class="c b r" style="left:549px;width:73px">-5</div><div class="c b r" style="left:622px;width:99px"></div><div class="c b r" style="left:721px;width:115px">603,775.00</div><div class="c b r" style="left:836px;width:60px">-71.40</div><div class="c b r" style="left:896px;width:42px">0.00</div><i class="vl" style="left:549px;background:#ebebe6"></i><i class="vl" style="left:622px;background:#ebebe6"></i><i class="vl" style="left:721px;background:#ebebe6"></i><i class="vl" style="left:836px;background:#ebebe6"></i><i class="vl" style="left:896px;background:#ebebe6"></i><i class="vl" style="left:938px;background:#ebebe6"></i></div><div class="row tot" style="top:641px;height:16px;line-height:17px;background:#e4e4e4"><div class="c b l" style="left:0px;width:721px;padding-left:12px">Total</div><div class="c b r" style="left:721px;width:115px">603,775.00</div><div class="c b r" style="left:836px;width:60px">-71.40</div><div class="c b r" style="left:896px;width:42px">0.00</div><i class="vl" style="left:721px;background:#ebebe6"></i><i class="vl" style="left:836px;background:#ebebe6"></i><i class="vl" style="left:896px;background:#ebebe6"></i><i class="vl" style="left:938px;background:#ebebe6"></i></div></div><div class="panel" style="top:672px;height:26px"><svg class="chev" width="10" height="11" viewBox="0 0 10 11"><path d="M0.1 0.7 L3.5 0.7 L8.4 5.25 L3.5 9.8 L0.1 9.8 L4.4 5.25 Z" fill="#3d66a6"/></svg><span class="ptitle">Financial Instrument Information</span><svg class="help" width="14" height="14" viewBox="0 0 14 14"><circle cx="7" cy="7" r="6.9" fill="#4a70ab"/><path d="M5.05 5.6 A1.9 1.9 0 1 1 8.6 6.55 Q8.2 7.2 7.5 7.6 Q6.95 7.95 6.95 9.1" stroke="#fff" stroke-width="2" fill="none"/><circle cx="6.95" cy="10.85" r="1.1" fill="#fff"/></svg></div><div class="panel" style="top:701px;height:26px"><svg class="chev" width="10" height="11" viewBox="0 0 10 11"><path d="M0.1 0.7 L3.5 0.7 L8.4 5.25 L3.5 9.8 L0.1 9.8 L4.4 5.25 Z" fill="#3d66a6"/></svg><span class="ptitle">Codes</span><svg class="help" width="14" height="14" viewBox="0 0 14 14"><circle cx="7" cy="7" r="6.9" fill="#4a70ab"/><path d="M5.05 5.6 A1.9 1.9 0 1 1 8.6 6.55 Q8.2 7.2 7.5 7.6 Q6.95 7.95 6.95 9.1" stroke="#fff" stroke-width="2" fill="none"/><circle cx="6.95" cy="10.85" r="1.1" fill="#fff"/></svg></div><div class="panel" style="top:731px;height:26px"><svg class="chevd" width="11" height="10" viewBox="0 0 11 10"><path d="M0.1 0.9 L3.3 0.9 L5.05 4.9 L6.8 0.9 L10 0.9 L5.05 9.2 Z" fill="#3d66a6"/></svg><span class="ptitle">Notes/Legal Notes</span></div></body></html>
